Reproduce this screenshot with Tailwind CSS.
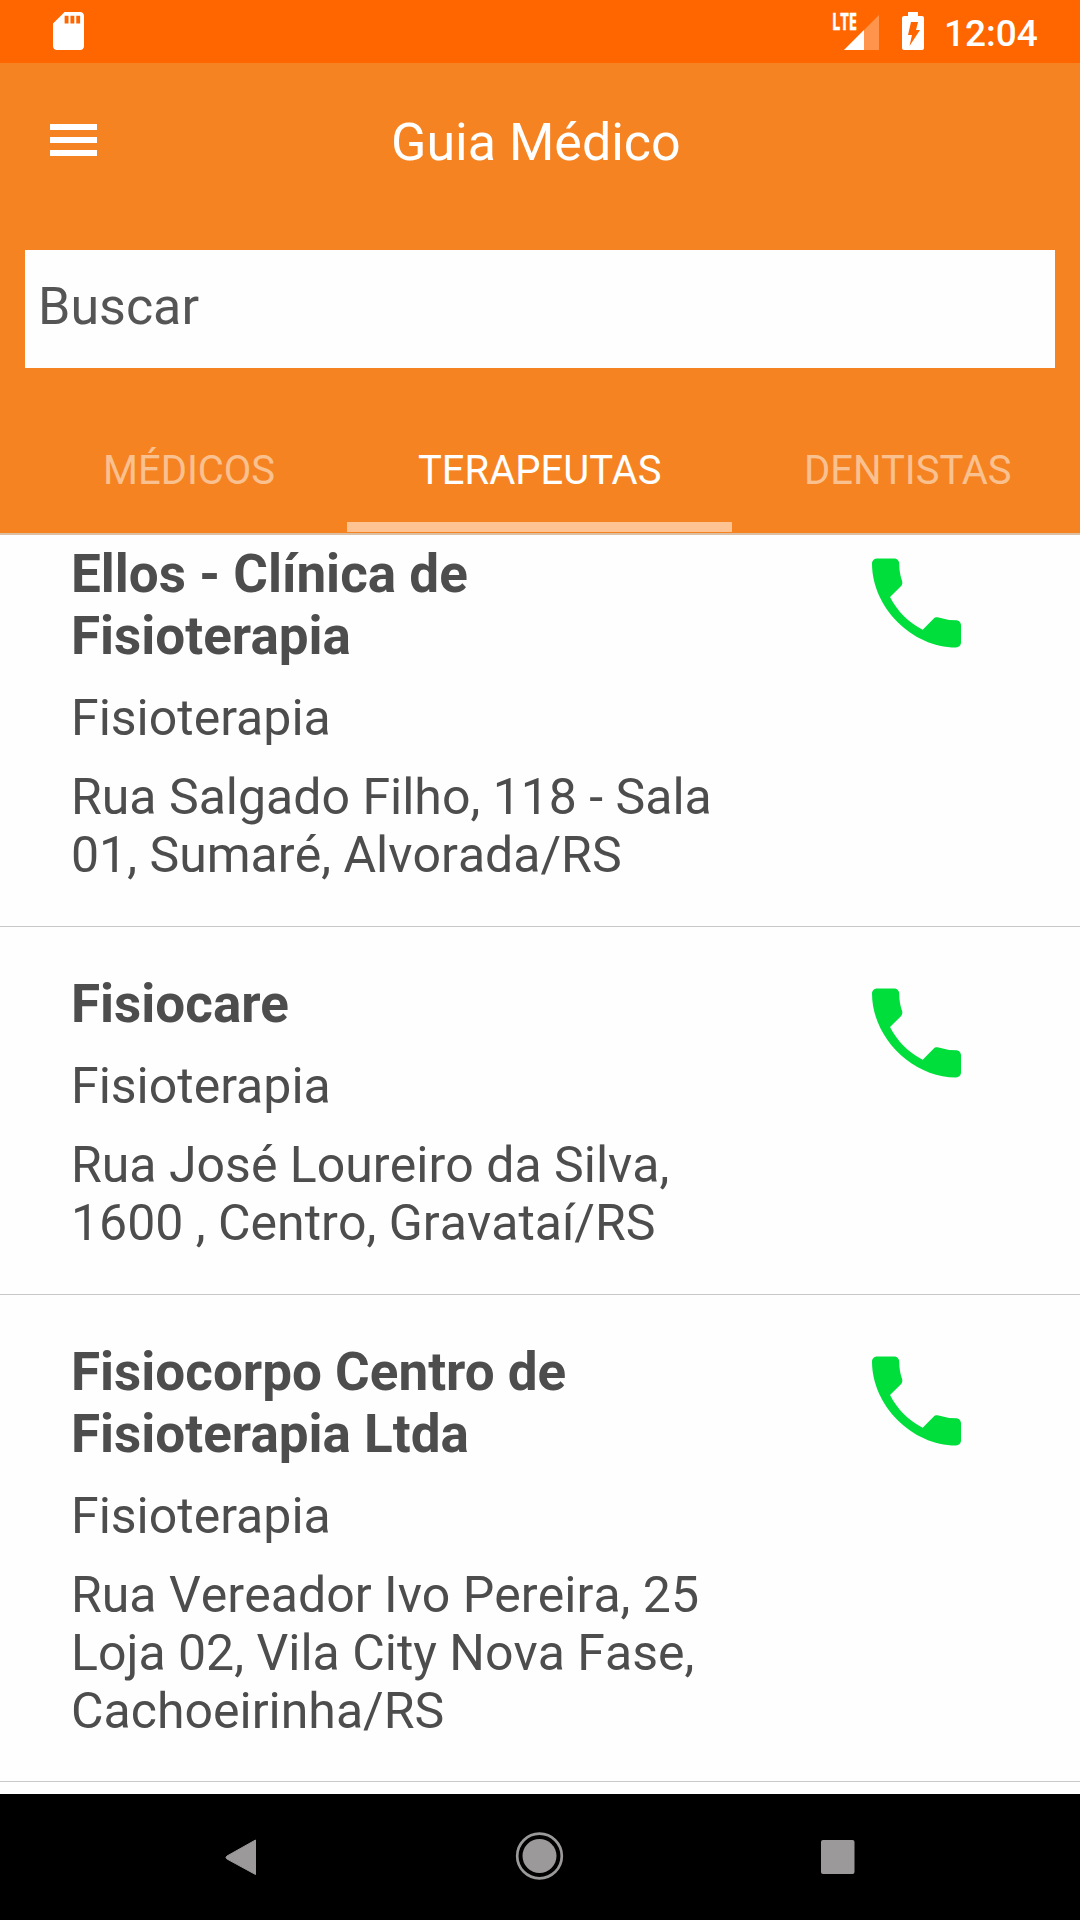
<!DOCTYPE html>
<html lang="pt-BR"><head><meta charset="utf-8"><title>Guia Médico</title>
<script src="https://cdn.jsdelivr.net/npm/@tailwindcss/browser@4"></script></head>
<body class="w-[1080px] h-[1920px] overflow-hidden bg-[#fefefe] font-['Roboto',sans-serif] text-[#4d4d4d] flex flex-col">
<svg class="hidden"><symbol id="call" viewBox="64 64 384 384"><path d="M426.666 330.667a250.385 250.385 0 0 1-75.729-11.729c-7.469-2.136-16-1.073-21.332 5.333l-46.939 46.928c-60.802-30.928-109.864-80-140.802-140.803l46.939-46.927c5.332-5.333 7.462-13.864 5.332-21.333-8.537-24.531-12.802-50.136-12.802-76.803C181.333 73.604 171.734 64 160 64H85.333C73.599 64 64 73.604 64 85.333 64 274.656 237.344 448 426.666 448c11.730 0 21.334-9.604 21.334-21.333V352c0-11.729-9.604-21.333-21.334-21.333z"/></symbol></svg>
<header class="h-[63px] shrink-0 bg-[#ff6600] flex items-start text-white">
<svg class="ml-[53px] mt-[12px] w-[31px] h-[38px]" viewBox="4 2 16 20" preserveAspectRatio="none" fill="#fff"><path d="M18 2h-8L4.020 8 4 20c0 1.100.9 2 2 2h12c1.100 0 2-.9 2-2V4c0-1.100-.9-2-2-2zm-6 6h-2V4h2v4zm3 0h-2V4h2v4zm3 0h-2V4h2v4z"/></svg>
<svg class="ml-[746px] w-[56px] h-[60px]" viewBox="830 0 56 60"><path d="M879 15v35h-35z" fill="#fff" opacity=".3"/><path d="M864 30v20h-20z" fill="#fff"/><text x="832" y="30" font-family="Open Sans" font-weight="700" font-size="23" textLength="25" lengthAdjust="spacingAndGlyphs" fill="#fff" stroke="#fff" stroke-width=".5">LTE</text></svg>
<svg class="ml-[16px] mt-[12px] w-[22px] h-[38px]" viewBox="0 0 22 38"><path d="M6 0h10v4h4q2 0 2 2v30q0 2-2 2H2q-2 0-2-2V6q0-2 2-2h4z" fill="#fff"/><path d="M9 10h7l-2 8h4L7.500 34l2.500-11H6z" fill="#ff6600"/></svg>
<span class="ml-[20px] mt-[12px] leading-[44px] text-[37px] font-medium whitespace-nowrap">12:04</span>
</header>
<section class="h-[472px] shrink-0 bg-[#f68322] text-white flex flex-col border-b-2 border-[#dcc0a4]">
<div class="h-[187px] shrink-0 flex"><svg class="ml-[50px] mt-[61px] w-[47px] h-8" viewBox="0 0 47 32" fill="#fff"><path d="M0 0h47v6H0zM0 13h47v6H0zM0 26h47v6H0z"/></svg><h1 class="ml-[294px] mt-[50px] text-[52px] leading-[60px] whitespace-nowrap">Guia Médico</h1></div>
<div class="ml-[25px] w-[1030px] h-[118px] shrink-0 bg-[#fefefe] text-[#555] text-[52px] leading-[113px] pl-[13px]">Buscar</div>
<nav class="h-[164px] flex text-[40px] whitespace-nowrap text-white/50"><div class="w-[347px] pl-[103px] pt-[73px]">MÉDICOS</div><div class="w-[385px] pl-[71px] pt-[73px] text-white border-b-[10px] border-[#fec392]">TERAPEUTAS</div><div class="pl-[72px] pt-[73px]">DENTISTAS</div></nav>
</section>
<main class="h-[1259px] shrink-0 overflow-hidden text-[50px] leading-[58px] whitespace-nowrap">
<article class="h-[392px] pt-[8px] pl-[71px] flex border-b border-[#c8c8c8]"><div class="w-[801px] shrink-0"><h2 class="font-bold text-[53px] leading-[62px]">Ellos - Clínica de<br>Fisioterapia</h2><p class="mt-[22px]">Fisioterapia</p><p class="mt-[21px] [font-kerning:none]">Rua Salgado Filho, 118 - Sala<br>01, Sumaré, Alvorada/RS</p></div><svg class="w-[89px] h-[90px] mt-[15px]" preserveAspectRatio="none" fill="#00de3c"><use href="#call"/></svg></article>
<article class="h-[368px] pt-[46px] pl-[71px] flex border-b border-[#c8c8c8]"><div class="w-[801px] shrink-0"><h2 class="font-bold text-[53px] leading-[62px]">Fisiocare</h2><p class="mt-[22px]">Fisioterapia</p><p class="mt-[21px] [font-kerning:none]">Rua José Loureiro da Silva,<br>1600 , Centro, Gravataí/RS</p></div><svg class="w-[89px] h-[90px] mt-[15px]" fill="#00de3c"><use href="#call"/></svg></article>
<article class="h-[487px] pt-[46px] pl-[71px] flex border-b border-[#c8c8c8]"><div class="w-[801px] shrink-0"><h2 class="font-bold text-[53px] leading-[62px]">Fisiocorpo Centro de<br>Fisioterapia Ltda</h2><p class="mt-[22px]">Fisioterapia</p><p class="mt-[21px] [font-kerning:none]">Rua Vereador Ivo Pereira, 25<br>Loja 02, Vila City Nova Fase,<br>Cachoeirinha/RS</p></div><svg class="w-[89px] h-[90px] mt-[15px]" fill="#00de3c"><use href="#call"/></svg></article>
</main>
<footer class="flex-1 bg-black"><svg class="w-[1080px] h-[126px]" viewBox="0 1794 1080 126" fill="#9b9999"><path d="M255.500 1840v34.500L227 1859q-2-1.500 0-3z" stroke="#9b9999" stroke-linejoin="round"/><circle cx="539.500" cy="1856" r="22.300" fill="none" stroke="#9b9999" stroke-width="2.700"/><circle cx="539.500" cy="1856" r="17"/><rect x="821" y="1840" width="33.500" height="34" rx="2"/></svg></footer>
</body></html>
